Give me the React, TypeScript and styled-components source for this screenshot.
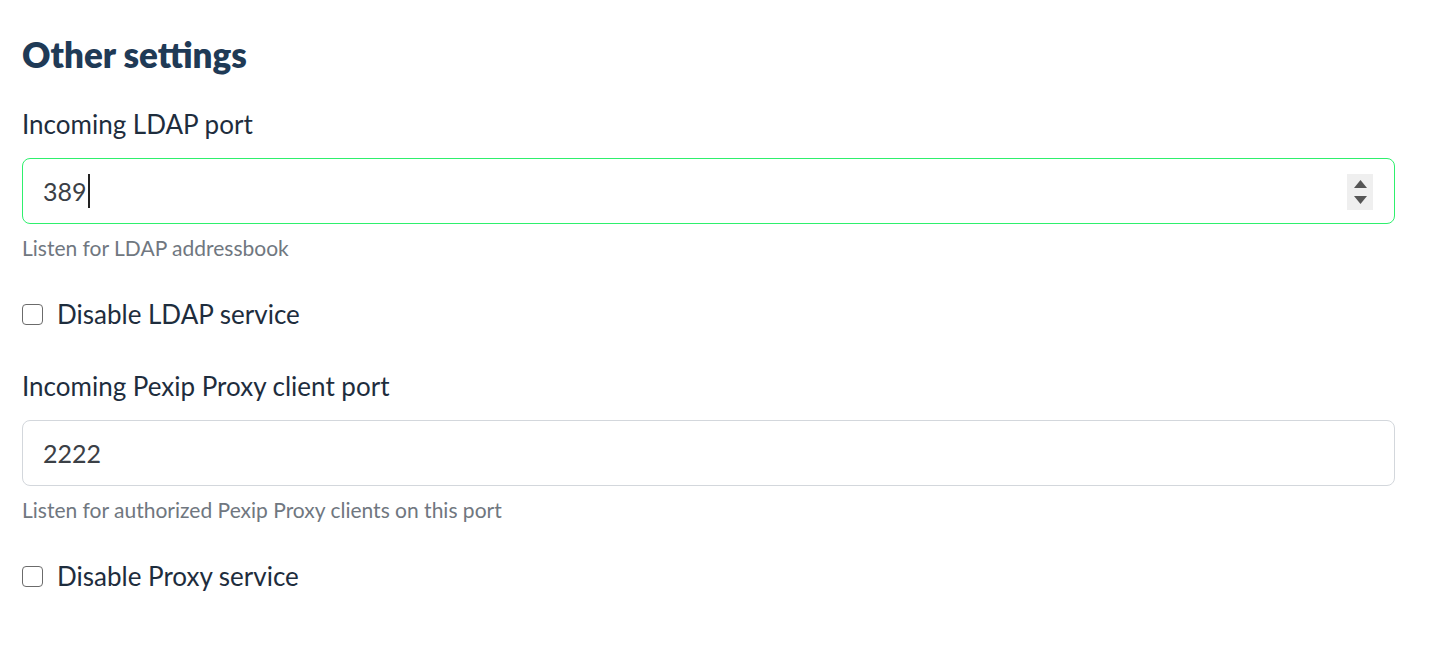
import React from "react";
import styled, { createGlobalStyle } from "styled-components";

const Global = createGlobalStyle`
  html, body { margin: 0; padding: 0; background: #ffffff; }
  body { font-family: "Lato", "Noto Sans", sans-serif; }
`;

const Page = styled.div`
  padding: 30px 42px 0 22px;
  display: flex;
  flex-direction: column;
`;

const Heading = styled.h3`
  margin: 0 0 30px 0;
  font-size: 35px;
  line-height: 48px;
  font-weight: 800;
  color: #1f3a56;
`;

const Group = styled.div<{ $gap?: number }>`
  display: flex;
  flex-direction: column;
  margin-bottom: ${(p) => p.$gap ?? 38}px;
`;

const Label = styled.div`
  font-size: 26px;
  line-height: 32px;
  color: #1e2d3d;
  margin-bottom: 18px;
`;

const Field = styled.div<{ $focused?: boolean }>`
  position: relative;
  height: 66px;
  box-sizing: border-box;
  border: 1px solid ${(p) => (p.$focused ? "#2ef06d" : "#d3d7dc")};
  border-radius: 8px;
  display: flex;
  align-items: center;
  padding-left: 20px;
  font-size: 25px;
  color: #3b4046;
`;

const Caret = styled.span`
  display: inline-block;
  width: 2px;
  height: 34px;
  background: #222;
  margin-left: 1px;
`;

const Spinner = styled.div`
  position: absolute;
  right: 21px;
  top: 15px;
  width: 26px;
  height: 36px;
  background: #efefef;
  display: flex;
  flex-direction: column;
  align-items: center;
  justify-content: center;
  gap: 8px;
`;

const Help = styled.div`
  margin-top: 12px;
  font-size: 21px;
  line-height: 24px;
  color: #707780;
`;

const CheckRow = styled.label`
  display: flex;
  align-items: center;
  gap: 14px;
  font-size: 26px;
  line-height: 32px;
  color: #1e2d3d;
`;

const Box = styled.span`
  width: 21px;
  height: 21px;
  box-sizing: border-box;
  border: 1.5px solid #6b6b6b;
  border-radius: 4px;
  background: #fff;
  flex: none;
`;

const Arrow = ({ up }: { up?: boolean }) => (
  <svg width="13" height="8" viewBox="0 0 13 8">
    {up ? <polygon points="0,8 13,8 6.5,0" fill="#555" /> : <polygon points="0,0 13,0 6.5,8" fill="#555" />}
  </svg>
);

export default function App() {
  return (
    <>
      <Global />
      <Page>
        <Heading>Other settings</Heading>
        <Group>
          <Label>Incoming LDAP port</Label>
          <Field $focused>
            389
            <Caret />
            <Spinner>
              <Arrow up />
              <Arrow />
            </Spinner>
          </Field>
          <Help>Listen for LDAP addressbook</Help>
        </Group>
        <Group $gap={40}>
          <CheckRow>
            <Box />
            Disable LDAP service
          </CheckRow>
        </Group>
        <Group>
          <Label>Incoming Pexip Proxy client port</Label>
          <Field>2222</Field>
          <Help>Listen for authorized Pexip Proxy clients on this port</Help>
        </Group>
        <Group>
          <CheckRow>
            <Box />
            Disable Proxy service
          </CheckRow>
        </Group>
      </Page>
    </>
  );
}
